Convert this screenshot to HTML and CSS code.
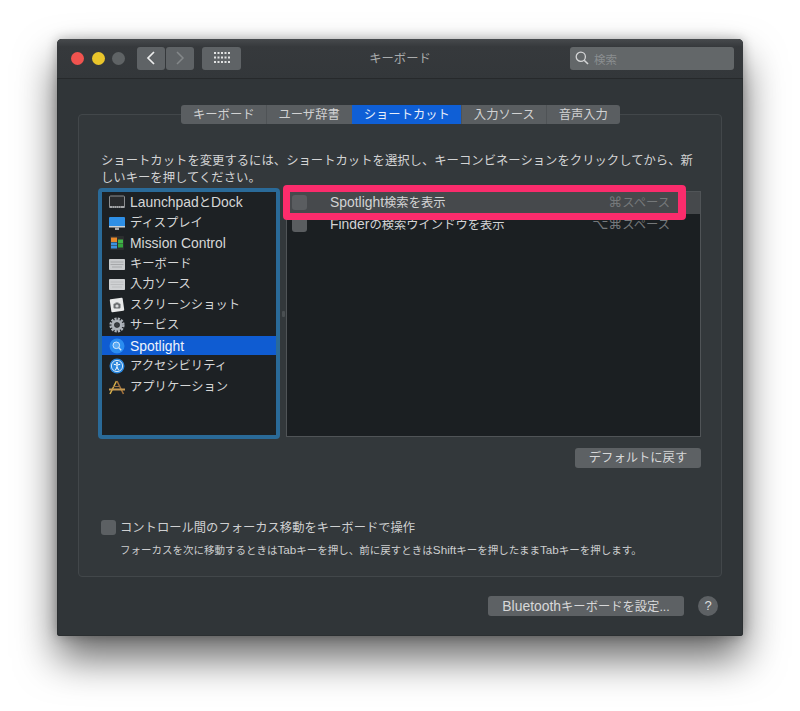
FILE: index.html
```html
<!DOCTYPE html>
<html lang="ja">
<head>
<meta charset="utf-8">
<title>キーボード</title>
<link rel="stylesheet" href="styles.css">
</head>
<body>
<div class="window">
  <header class="titlebar">
    <div class="lights">
      <span class="light red"></span><span class="light yellow"></span><span class="light gray"></span>
    </div>
    <div class="nav">
      <span class="navbtn"><svg width="12" height="16" viewBox="0 0 12 16"><path d="M9 2 L3 8 L9 14" fill="none" stroke="#eceded" stroke-width="1.7"/></svg></span>
      <span class="navbtn"><svg width="12" height="16" viewBox="0 0 12 16"><path d="M3 2 L9 8 L3 14" fill="none" stroke="#84888a" stroke-width="1.5"/></svg></span>
    </div>
    <span class="gridbtn"><svg width="16" height="12" viewBox="0 0 16 12" fill="#e2e3e3"><rect x="0" y="0" width="2" height="2"/><rect x="3.5" y="0" width="2" height="2"/><rect x="7" y="0" width="2" height="2"/><rect x="10.5" y="0" width="2" height="2"/><rect x="14" y="0" width="2" height="2"/><rect x="0" y="4.5" width="2" height="2"/><rect x="3.5" y="4.5" width="2" height="2"/><rect x="7" y="4.5" width="2" height="2"/><rect x="10.5" y="4.5" width="2" height="2"/><rect x="14" y="4.5" width="2" height="2"/><rect x="0" y="9" width="2" height="2"/><rect x="3.5" y="9" width="2" height="2"/><rect x="7" y="9" width="2" height="2"/><rect x="10.5" y="9" width="2" height="2"/><rect x="14" y="9" width="2" height="2"/></svg></span>
    <div class="title">キーボード</div>
    <div class="search">
      <svg width="14" height="14" viewBox="0 0 14 14"><circle cx="5.8" cy="5.8" r="4.6" fill="none" stroke="#d4d5d6" stroke-width="1.3"/><path d="M9.2 9.2 L13 13" stroke="#d4d5d6" stroke-width="1.6"/></svg>
      <span class="search-text">検索</span>
    </div>
  </header>

  <nav class="tabs">
    <span class="tab">キーボード</span><span class="tab">ユーザ辞書</span><span class="tab active">ショートカット</span><span class="tab">入力ソース</span><span class="tab">音声入力</span>
  </nav>

  <section class="panel">
    <p class="intro">ショートカットを変更するには、ショートカットを選択し、キーコンビネーションをクリックしてから、新しいキーを押してください。</p>
    <div class="split">
      <ul class="services">
        <li class="svc"><svg class="ico" viewBox="0 0 18 16"><rect x="1.5" y="2" width="15" height="11.5" rx="1" fill="#2a2c2e" stroke="#8b8d8f"/><rect x="1.5" y="12" width="15" height="2" fill="#a4a6a8"/><path d="M4 13h10" stroke="#55585a" stroke-dasharray="1 1"/></svg><span><span class="lat">Launchpad</span>と<span class="lat">Dock</span></span></li>
        <li class="svc"><svg class="ico" viewBox="0 0 18 16"><rect x="1" y="2" width="16" height="10" rx="1" fill="#2e8fe6"/><rect x="1" y="11" width="16" height="1.5" fill="#cfd2d4"/><rect x="7" y="12.5" width="4" height="2.5" fill="#a9acae"/></svg><span>ディスプレイ</span></li>
        <li class="svc"><svg class="ico" viewBox="0 0 18 16"><rect x="2" y="1" width="14" height="14" rx="1" fill="#2c2e2f"/><rect x="3" y="2.5" width="6" height="4.5" fill="#e88a2c"/><rect x="10" y="4.5" width="5" height="4" fill="#43b649"/><rect x="10" y="9" width="5" height="3.5" fill="#35a53e"/><rect x="3" y="7.5" width="6" height="3" fill="#3b93e0"/><rect x="3" y="11" width="6" height="2.5" fill="#3b93e0"/></svg><span class="lat">Mission Control</span></li>
        <li class="svc"><svg class="ico" viewBox="0 0 18 16"><rect x="1" y="3" width="16" height="11" rx=".8" fill="#c9cbcd"/><path d="M2.5 6h13M2.5 8.5h13M4 11h10" stroke="#a6a8aa" stroke-width="1"/></svg><span>キーボード</span></li>
        <li class="svc"><svg class="ico" viewBox="0 0 18 16"><rect x="1" y="3" width="16" height="11" rx=".8" fill="#cfd1d3"/><path d="M2.5 6h13M2.5 8.5h13M4 11h10" stroke="#bcbec0" stroke-width="1"/></svg><span>入力ソース</span></li>
        <li class="svc"><svg class="ico" viewBox="0 0 18 16"><rect x="2.5" y="1.5" width="13" height="13" rx="1" fill="#e9eaea" transform="rotate(-8 9 8)"/><rect x="5.5" y="6.5" width="7" height="5" rx="1" fill="#6b6e70"/><rect x="7.5" y="5.5" width="3" height="1.5" fill="#6b6e70"/><circle cx="9" cy="9" r="1.6" fill="#d6d8d9"/></svg><span>スクリーンショット</span></li>
        <li class="svc"><svg class="ico" viewBox="0 0 18 16"><circle cx="9" cy="8" r="6.4" fill="none" stroke="#aeb3b9" stroke-width="2.4" stroke-dasharray="2.2 1.15"/><circle cx="9" cy="8" r="4.2" fill="none" stroke="#aeb3b9" stroke-width="2.8"/><circle cx="9" cy="8" r="2.2" fill="#3a3d41"/></svg><span>サービス</span></li>
        <li class="svc selected"><svg class="ico" viewBox="0 0 18 16"><circle cx="9" cy="8" r="7.5" fill="#2b8df0"/><circle cx="8.3" cy="7.3" r="3.3" fill="#5aaaf5" stroke="#d7e9fb" stroke-width="1"/><path d="M10.8 9.8 L13.2 12.2" stroke="#d7e9fb" stroke-width="1.3"/></svg><span class="lat">Spotlight</span></li>
        <li class="svc"><svg class="ico" viewBox="0 0 18 16"><circle cx="9" cy="8" r="7.5" fill="#2a86dd"/><circle cx="9" cy="8" r="5.6" fill="none" stroke="#e4f0fb" stroke-width=".9"/><circle cx="9" cy="4.9" r="1" fill="#fff"/><path d="M5.8 6.3 L9 7 L12.2 6.3 M9 7 V9 M9 9 L7.4 12.2 M9 9 L10.6 12.2" fill="none" stroke="#fff" stroke-width="1"/></svg><span>アクセシビリティ</span></li>
        <li class="svc"><svg class="ico" viewBox="0 0 18 16"><path d="M2 15 L8.5 2" stroke="#d8b14a" stroke-width="1.6"/><path d="M15.5 15 L9 2" stroke="#a0703c" stroke-width="1.6"/><path d="M1 10.5h16" stroke="#c69a52" stroke-width="2"/><path d="M5 7.5h7" stroke="#9b7344" stroke-width="1"/></svg><span>アプリケーション</span></li>
      </ul>
      <div class="splitter"><span class="grip"></span></div>
      <div class="table">
        <div class="row current"><span class="box"></span><span class="name"><span class="lat">Spotlight</span>検索を表示</span><span class="keys"><span class="sym">⌘</span>スペース</span></div>
        <div class="row"><span class="box"></span><span class="name"><span class="lat">Finder</span>の検索ウインドウを表示</span><span class="keys"><span class="sym">⌥⌘</span>スペース</span></div>
        <div class="callout"></div>
      </div>
    </div>
    <div class="defaults"><button class="btn default-btn">デフォルトに戻す</button></div>
    <label class="focus"><span class="box large"></span><span class="focus-text">コントロール間のフォーカス移動をキーボードで操作</span></label>
    <p class="hint">フォーカスを次に移動するときは<span class="lat-s">Tab</span>キーを押し、前に戻すときは<span class="lat-s">Shift</span>キーを押したまま<span class="lat-s">Tab</span>キーを押します。</p>
  </section>

  <footer class="footer">
    <button class="btn bt-btn"><span class="lat">Bluetooth</span>キーボードを設定...</button>
    <span class="help">?</span>
  </footer>
</div>
</body>
</html>
```

FILE: styles.css
```css
* { box-sizing: border-box; }
html, body { margin: 0; padding: 0; background: #fff; }
body {
  width: 800px;
  height: 711px;
  padding: 39px 57px 0;
  overflow: hidden;
  font-family: "Liberation Sans", "Noto Sans CJK JP", sans-serif;
  font-size: 12.3px;
  color: #d3d4d5;
}
.lat { font-size: 13.9px; }
.lat-s { font-size: 11.7px; }
.window {
  width: 686px;
  height: 597px;
  display: flex;
  flex-direction: column;
  background: #303538;
  border-radius: 5px 5px 3px 3px;
  box-shadow: 0 22px 40px rgba(0,0,0,.6), 0 0 12px rgba(0,0,0,.28), inset 0 0 0 1px #2b2f31;
}
.titlebar {
  height: 40px;
  flex: none;
  display: flex;
  align-items: center;
  padding: 0 9px 1px 14px;
  background: linear-gradient(#474a4d, #36393c 20%, #33373a);
  border-bottom: 1px solid #26292b;
  border-radius: 5px 5px 0 0;
  position: relative;
}
.lights { display: flex; gap: 7.5px; }
.light { width: 13px; height: 13px; border-radius: 50%; }
.red { background: #f0534f; }
.yellow { background: #e9c52b; }
.gray { background: #5f6365; }
.nav { display: flex; gap: 1px; margin-left: 12px; }
.navbtn, .gridbtn {
  height: 23px;
  display: flex;
  align-items: center;
  justify-content: center;
  background: #5f6366;
  border-radius: 3px;
}
.navbtn { width: 28px; }
.gridbtn { width: 39px; margin-left: 8px; }
.title {
  position: absolute;
  left: 0; right: 0;
  top: 12px;
  text-align: center;
  color: #a9abac;
  line-height: 16px;
  pointer-events: none;
}
.search {
  margin-left: auto;
  width: 164px;
  height: 23px;
  display: flex;
  align-items: center;
  gap: 5px;
  padding-left: 5px;
  background: #636769;
  border-radius: 3px;
  color: #8a8e90;
  font-size: 11.5px;
}
.search-text { padding-top: 2px; }
.tabs {
  display: flex;
  align-self: flex-start;
  margin: 26px 0 0 124px;
  height: 19px;
  background: #5a5e61;
  border-radius: 3px;
  position: relative;
  z-index: 1;
  overflow: hidden;
}
.tab {
  padding: 0 12px;
  line-height: 20px;
  color: #d1d2d3;
  border-left: 1px solid #4f5356;
  margin-left: -1px;
}
.tab:first-child { border-left: 0; margin-left: 0; }
.tab.active { background: #0f5fd6; color: #e9eefa; border-left: 0; margin-left: 0; }
.panel {
  margin: -10px 21px 0;
  height: 463px;
  padding: 38px 20px 0 19px;
  background: #33383b;
  border: 1px solid #42474a;
  border-radius: 4px;
}
.intro {
  margin: 0 0 2px 3px;
  line-height: 16.5px;
  height: 33px;
  font-size: 12.35px;
}
.split { display: flex; align-items: flex-start; }
.services {
  list-style: none;
  margin: 0;
  padding: 0;
  width: 182px;
  height: 251px;
  display: flex;
  flex-direction: column;
  gap: 1px;
  background: #1d2124;
  border: 4px solid #2a6a98;
  border-radius: 4px;
}
.svc {
  height: 19.5px;
  flex: none;
  display: flex;
  align-items: center;
  gap: 4px;
  padding: 1px 0 0 6px;
  line-height: 18.5px;
  color: #d6d7d7;
}
.svc.selected { background: #0f5cd2; color: #eef3fb; }
.ico { width: 18px; height: 16px; flex: none; }
.splitter {
  width: 6px;
  height: 251px;
  display: flex;
  align-items: center;
  justify-content: center;
}
.grip { width: 3px; height: 6px; background: #4a4f52; border-radius: 1px; }
.table {
  position: relative;
  width: 415px;
  height: 246px;
  margin-top: 3px;
  background: #1b1f22;
  border: 1px solid #505457;
}
.row {
  height: 21.5px;
  display: flex;
  align-items: center;
  padding: 0 30px 0 5px;
  color: #d2d3d4;
  line-height: 18px;
}
.row.current { background: #46494c; }
.box {
  width: 15px;
  height: 15px;
  flex: none;
  background: #5a5d60;
  border-radius: 3px;
}
.name { margin-left: 23px; }
.keys { margin-left: auto; color: #75787a; }
.sym { font-family: "DejaVu Sans", sans-serif; font-size: 14px; }
.callout {
  position: absolute;
  left: -4px;
  top: -7px;
  width: 403px;
  height: 35px;
  border: solid #fb2c6c;
  border-width: 7px 8px 7px 7px;
  border-radius: 4px;
}
.defaults { display: flex; justify-content: flex-end; margin-top: 9px; }
.btn {
  height: 20px;
  padding: 0;
  border: 0;
  border-radius: 3px;
  background: #5d6164;
  color: #d7d8d9;
  font: inherit;
  line-height: 20px;
}
.default-btn { width: 126px; }
.focus {
  display: flex;
  align-items: center;
  gap: 4px;
  margin: 52px 0 0 3px;
  height: 15px;
  line-height: 15px;
  color: #cfd0d1;
}
.focus-text { padding-top: 2px; }
.box.large { background: #5c6063; }
.hint {
  margin: 8px 0 0 22px;
  font-size: 10.5px;
  line-height: 14px;
  color: #cdcecf;
}
.footer {
  display: flex;
  justify-content: flex-end;
  align-items: center;
  gap: 14px;
  padding-right: 25px;
  margin-top: 19px;
}
.bt-btn { width: 196px; }
.help {
  width: 20px;
  height: 20px;
  border-radius: 50%;
  background: #5d6164;
  color: #dcdddd;
  text-align: center;
  line-height: 20px;
  font-size: 13px;
}
```
